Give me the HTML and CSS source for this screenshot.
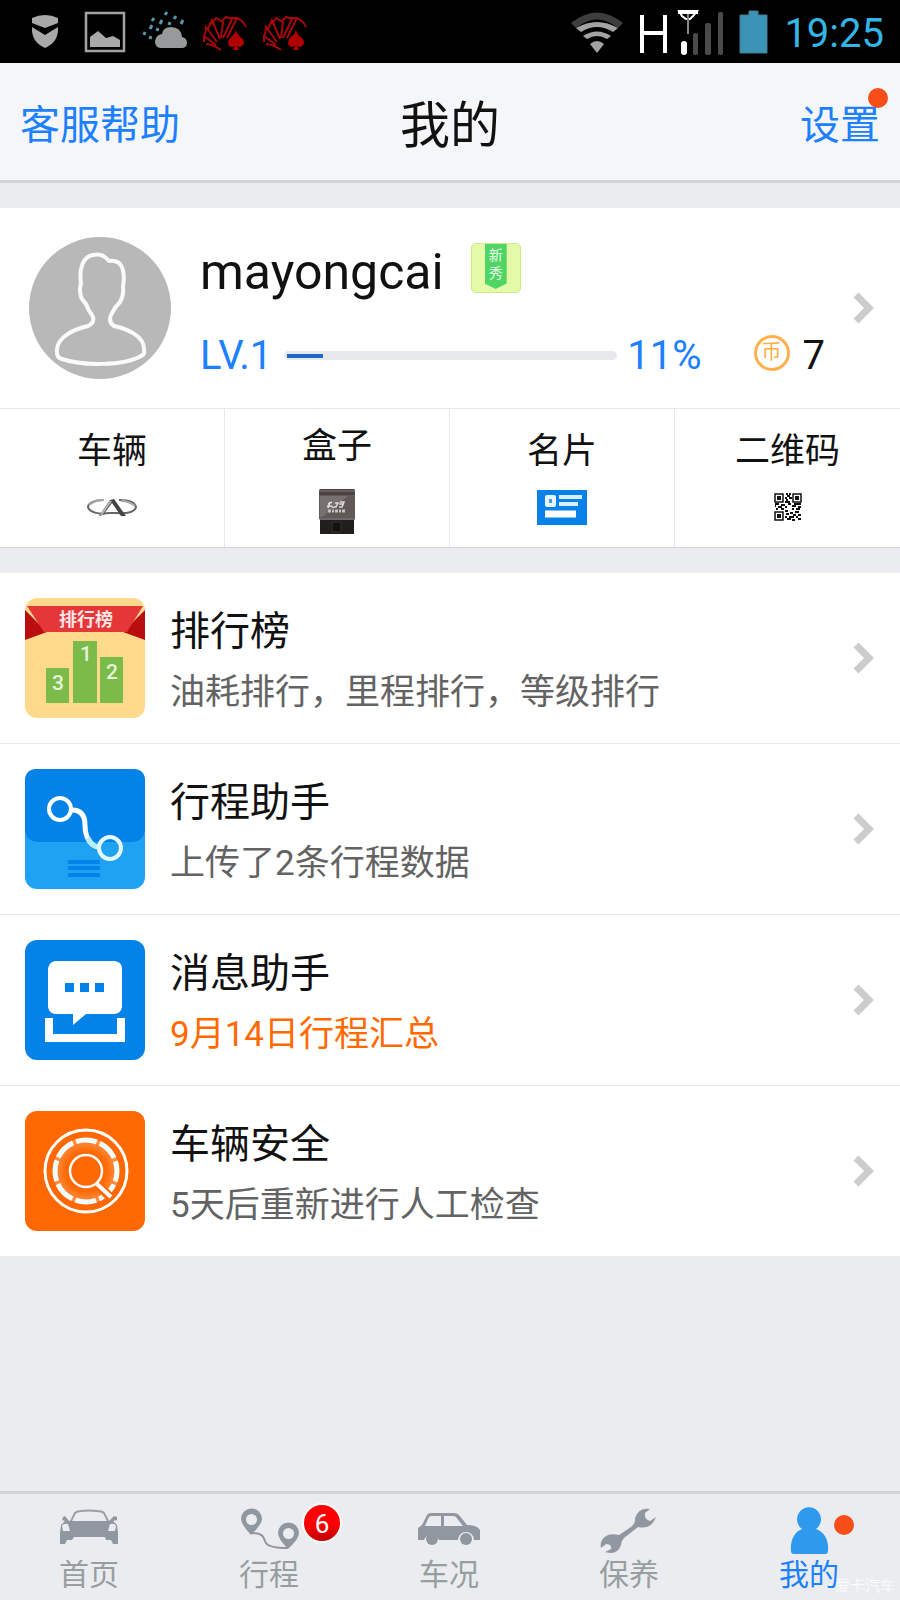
FILE: index.html
```html
<!DOCTYPE html>
<html lang="zh-CN">
<head>
<meta charset="utf-8">
<meta name="viewport" content="width=device-width, initial-scale=1">
<title>我的</title>
<link rel="stylesheet" href="styles.css">
</head>
<body>
<div class="statusbar">
  <div class="notices">
    <svg width="60" height="63" viewBox="0 0 60 63" fill="#a9a9a9"><path d="M32 18Q45 12 58 18V23L45 28L32 23Z"/><path d="M32 27L45 35L58 27Q59 42 45 48Q31 42 32 27Z"/></svg>
    <svg width="60" height="63" viewBox="0 0 60 63"><path d="M26 13H64V51H26Z" fill="none" stroke="#a3a3a3" stroke-width="2.500"/><path d="M30 47V37L38 31L46 38L53 36L60 40V47Z" fill="#a9a9a9"/></svg>
    <svg width="60" height="63" viewBox="0 0 60 63"><path d="M40 48Q35 47 35 41Q36 35 42 34Q43 27 51 27Q61 27 62 37Q67 38 67 43Q67 47 63 48Z" fill="#969a9b"/><path d="M47 12L45 15M34 18L32 21M56 16L54 19M42 20L40 24M50 22L49 25M63 20L61 24M32 25L30 29M38 28L37 31M25 32L24 35M31 36L30 39" stroke="#5a93aa" stroke-width="3"/></svg>
    <svg width="60" height="63" viewBox="0 0 60 63"><g fill="none" stroke="#a50808" stroke-width="2"><path d="M24 42L24 36L36 45M25 35L26 27L37 42M28 29L32 20L40 39M32 24L36 18L43 22L41 38M41 22L46 17L52 19L43 38M48 18L57 18L47 38M26 44Q32 44 41 50"/><path d="M51 18Q62 17 66 27"/></g><path d="M56 30Q57 35 63 39Q66 45 60 47Q58 47 57 46L59 50H53L55 46Q49 49 48 43Q48 40 51 37Q55 34 56 30Z" fill="#b00000"/></svg>
    <svg width="60" height="63" viewBox="0 0 60 63"><g fill="none" stroke="#a50808" stroke-width="2"><path d="M24 42L24 36L36 45M25 35L26 27L37 42M28 29L32 20L40 39M32 24L36 18L43 22L41 38M41 22L46 17L52 19L43 38M48 18L57 18L47 38M26 44Q32 44 41 50"/><path d="M51 18Q62 17 66 27"/></g><path d="M56 30Q57 35 63 39Q66 45 60 47Q58 47 57 46L59 50H53L55 46Q49 49 48 43Q48 40 51 37Q55 34 56 30Z" fill="#b00000"/></svg>
  </div>
  <div class="system">
    <svg width="52" height="42" viewBox="0 0 52 42"><path d="M0 12Q26-9 52 12L47 17Q26 0 5 17Z" fill="#3e3e3e"/><g fill="#a3a3a3"><path d="M5 17Q26 5 47 17L42 21Q26 11 10 21Z"/><path d="M12 25Q26 16 40 25L36 28Q26 22 16 28Z"/><path d="M19 33Q26 27 33 33L26 42Z"/></g></svg>
    <svg width="84" height="46" viewBox="0 0 84 46"><path d="M3 6V44M26 6V44M3 24H26" fill="none" stroke="#fff" stroke-width="4"/><path d="M40 2H58L54 7L51 10H47L43 7Z" fill="none" stroke="#fff" stroke-width="2"/><path d="M49 3V25" stroke="#888" stroke-width="2"/><path d="M39 1H59V5H39Z" fill="#fff"/><rect x="42" y="32" width="6" height="14" rx="3" fill="#fff"/><g fill="#4a4a4a"><rect x="54" y="24" width="5" height="22" rx="2"/><rect x="66" y="14" width="6" height="32" rx="2"/><rect x="79" y="3" width="5" height="43" rx="2"/></g></svg>
    <svg width="29" height="44" viewBox="0 0 29 44"><path d="M1 5H10V1H19V5H28V43H1Z" fill="#3b93b6" stroke="#4b7c8e"/></svg>
    <time class="clock">19:25</time>
  </div>
</div>

<header class="titlebar">
  <div class="side"><button class="text-button" type="button">客服帮助</button></div>
  <h1 class="title">我的</h1>
  <div class="side side-end"><button class="text-button" type="button">设置<span class="dot dot-corner"></span></button></div>
</header>

<main class="content">
  <section class="profile">
    <a class="profile-main" href="#profile">
      <svg class="avatar" viewBox="0 0 142 142"><circle cx="71" cy="71" r="71" fill="#b8b8b8"/><path d="M80 24Q74 16 64 18C53 20 50 33 52 47Q50 51 52 60Q54 64 57 67Q59 73 63 78Q67 85 59 89C45 92 29 100 28 112Q27 121 33 122C53 129 95 129 112 119Q116 118 115 113C116 99 98 92 85 89Q79 85 82 78Q85 71 91 65Q95 58 94 50C96 37 94 27 88 25Q85 23 80 24Z" fill="none" stroke="#fafafa" stroke-width="4" stroke-linejoin="round"/></svg>
      <div class="profile-info">
        <div class="name-line">
          <span class="name">mayongcai</span>
          <span class="rank-badge"><span class="rank-ribbon">新秀</span></span>
        </div>
        <div class="level-line">
          <span class="level">LV.1</span>
          <span class="track"><span class="fill" style="width:11%"></span></span>
          <span class="percent">11%</span>
          <span class="coin">币</span>
          <span class="coins">7</span>
        </div>
      </div>
      <svg class="chevron" viewBox="0 0 21 32"><path d="M3 3L16 16L3 29" fill="none" stroke="#ccc" stroke-width="7"/></svg>
    </a>
    <nav class="shortcuts">
      <a class="shortcut" href="#car"><span>车辆</span>
        <svg width="50" height="46" viewBox="0 0 50 46"><g fill="none" stroke="#666" stroke-width="2"><path d="M17 15C6 15 1 19 1 22C2 27 12 30 21 28H30C40 29 48 27 49 22C48 17 41 15 32 15"/><path d="M2 20Q8 15 17 15M34 16Q42 16 48 21" stroke="#aaa"/></g><path d="M12 31L23 15L27 14L39 31H34L25 18L16 30Z" fill="#444"/><path d="M14 30L24 16" stroke="#bbb" stroke-width="2"/></svg></a>
      <a class="shortcut" href="#box"><span class="raised">盒子</span>
        <svg width="50" height="46" viewBox="0 0 50 46"><path d="M8 30H42V46H8Z" fill="#211e1e"/><path d="M20 34H29V44H20Z" fill="#151212" stroke="#363030"/><path d="M8 1H42Q43 1 43 4V31Q43 32 41 32H9Q7 32 7 30V4Q7 1 8 1Z" fill="#615858"/><path d="M8 1H42L43 7H7Z" fill="#4b4343"/><path d="M8 3H42" stroke="#8b8078"/><path d="M8 8H36L10 29H8Z" fill="#777071"/><path d="M8 31H42" stroke="#807987"/><path d="M16 16L20 14M15 18H19L22 20M18 14L16 20M23 15H26L24 19H22M28 14H32L30 19H27M27 16H32" stroke="#ddd" stroke-width="1.500" fill="none"/><path d="M16 23H34" stroke="#c7c2c1" stroke-width="3" stroke-dasharray="3 1 2 1"/></svg></a>
      <a class="shortcut" href="#card"><span>名片</span>
        <svg width="50" height="46" viewBox="0 0 50 46"><path d="M0 5H50V40H0Z" fill="#0882e8"/><path d="M10 12H17V20H10Z" fill="#3da1f2" stroke="#e8f5ff" stroke-width="4" stroke-linejoin="round"/><path d="M22 12H45M22 19H41" stroke="#d8edff" stroke-width="4"/><path d="M8 29H39" stroke="#fff" stroke-width="7"/></svg></a>
      <a class="shortcut" href="#qr"><span>二维码</span>
        <svg width="50" height="46" viewBox="0 0 50 46"><g transform="translate(11 8)" fill="none" stroke="#111"><path d="M1 1H9V9H1ZM19 1H27V9H19ZM1 19H9V27H1Z" stroke-width="1.500"/><path d="M3 5H7M21 5H25M3 23H7" stroke-width="4"/><path d="M12 1H14M15 1H17M13 3H16M11 5H13M15 5H18M12 7H14M11 9H16M1 11H5M7 12H11M14 11H17M20 11H27M1 13H2M4 14H8M11 14H13M18 13H22M24 14H27M2 16H4M7 16H10M18 16H20M22 16H26M11 18H14M16 20H19M21 19H25M12 21H15M19 22H22M24 22H27M11 24H13M15 24H20M22 24H24M13 26H17M18 27H21M24 26H27" stroke-width="2"/></g></svg></a>
    </nav>
  </section>

  <ul class="menu">
    <li><a class="menu-item" href="#ranking">
      <svg class="app-icon" viewBox="0 0 120 120"><rect width="120" height="120" rx="12" fill="#ffda8d"/><path d="M0 12L22 34L0 42ZM120 12L98 34L120 42Z" fill="#b90e10"/><path d="M2 8H118L102 34H19Z" fill="#e53638"/><text x="61" y="28" class="art-label">排行榜</text><path d="M21 70H44V105H21ZM48 43H72V105H48ZM75 59H98V105H75Z" fill="#7abb49"/><g class="art-number"><text x="33" y="92">3</text><text x="61" y="63">1</text><text x="87" y="81">2</text></g></svg>
      <div class="menu-text"><h2>排行榜</h2><p>油耗排行，里程排行，等级排行</p></div>
      <svg class="chevron" viewBox="0 0 21 32"><path d="M3 3L16 16L3 29" fill="none" stroke="#ccc" stroke-width="7"/></svg>
    </a></li>
    <li><a class="menu-item" href="#trips">
      <svg class="app-icon" viewBox="0 0 120 120"><rect width="120" height="120" rx="12" fill="#1fa2f2"/><path d="M12 0H108Q120 0 120 12V62Q118 73 107 73H13Q2 73 0 62V12Q0 0 12 0Z" fill="#0382e8"/><path d="M43 93H75M43 99H75M43 106H75" stroke="#0382e8" stroke-width="4"/><g fill="none" stroke="#fff" stroke-width="4"><circle cx="35" cy="40" r="11"/><path d="M47 41C58 41 60 49 60 56C60 69 66 77 73 78" stroke-width="5"/></g><path d="M63 69Q67 77 73 78" fill="none" stroke="#b5edff" stroke-width="5"/><circle cx="85" cy="79" r="11" fill="none" stroke="#e4faff" stroke-width="4"/></svg>
      <div class="menu-text"><h2>行程助手</h2><p>上传了2条行程数据</p></div>
      <svg class="chevron" viewBox="0 0 21 32"><path d="M3 3L16 16L3 29" fill="none" stroke="#ccc" stroke-width="7"/></svg>
    </a></li>
    <li><a class="menu-item" href="#messages">
      <svg class="app-icon" viewBox="0 0 120 120"><rect width="120" height="120" rx="12" fill="#0382e8"/><path d="M30 21H90Q97 22 97 29V67Q96 73 90 74H61L48 85V74H30Q24 73 23 67V29Q24 22 30 21Z" fill="#fff"/><path d="M40 43H49V52H40ZM55 43H64V52H55ZM70 43H79V52H70Z" fill="#0382e8"/><path d="M24 78V98H96V78" fill="none" stroke="#fff" stroke-width="8"/></svg>
      <div class="menu-text"><h2>消息助手</h2><p class="alert">9月14日行程汇总</p></div>
      <svg class="chevron" viewBox="0 0 21 32"><path d="M3 3L16 16L3 29" fill="none" stroke="#ccc" stroke-width="7"/></svg>
    </a></li>
    <li><a class="menu-item" href="#safety">
      <svg class="app-icon" viewBox="0 0 120 120"><defs><radialGradient id="halo"><stop offset=".6" stop-color="#ff6802"/><stop offset="1" stop-color="#ff9650"/></radialGradient></defs><rect width="120" height="120" rx="12" fill="#ff6802"/><circle cx="61" cy="60" r="41" fill="none" stroke="#fff" stroke-width="3"/><circle cx="61" cy="60" r="33" fill="url(#halo)"/><circle cx="61" cy="60" r="31" fill="none" stroke="#f0feff" stroke-width="5" stroke-dasharray="21 3.350" stroke-dashoffset="-14"/><circle cx="61" cy="60" r="16" fill="#ff6802" stroke="#fff" stroke-width="2.500"/><path d="M74 75L86 87" stroke="#ff6802" stroke-width="9"/><path d="M72 73L86 86" stroke="#fff" stroke-width="4"/></svg>
      <div class="menu-text"><h2>车辆安全</h2><p>5天后重新进行人工检查</p></div>
      <svg class="chevron" viewBox="0 0 21 32"><path d="M3 3L16 16L3 29" fill="none" stroke="#ccc" stroke-width="7"/></svg>
    </a></li>
  </ul>
</main>

<nav class="tabbar">
  <a class="tab" href="#home"><span class="tab-icon">
    <svg width="64" height="50" viewBox="0 0 64 50"><path d="M13 17L18 7Q20 5 24 5Q32 4 40 5Q45 5 47 7L52 17" fill="none" stroke="#9aa0a4" stroke-width="2"/><path d="M12 15H52L57 10L60 11V14L56 15L60 19L61 27V38H56L54 34H10L8 38H3V27L4 19L8 15L5 14L6 11L8 10Z" fill="#9097a0"/><path d="M5 20Q6 17 11 18L13 25H6ZM59 20Q58 17 53 18L51 25H58ZM17 31H48L49 34H15Z" fill="#ebecf0"/></svg></span>首页</a>
  <a class="tab" href="#trip"><span class="tab-icon">
    <svg width="64" height="50" viewBox="0 0 64 50"><path d="M14 27C29 27 26 33 29 37Q32 42 51 42" fill="none" stroke="#9097a0" stroke-width="2"/><path fill-rule="evenodd" d="M14 29Q4 18 4 13A10.500 10.500 0 0 1 25 13Q25 18 14 29ZM14.500 8A5.500 5.500 0 1 0 14.500 19A5.500 5.500 0 1 0 14.500 8ZM51 43Q41 33 41 27A10.500 10.500 0 0 1 62 27Q62 33 51 43ZM51.500 22A5.500 5.500 0 1 0 51.500 33A5.500 5.500 0 1 0 51.500 22Z" fill="#9097a0"/></svg>
    <span class="count">6</span></span>行程</a>
  <a class="tab" href="#status"><span class="tab-icon">
    <svg width="64" height="50" viewBox="0 0 64 50"><path d="M1 34V22L5 19L10 9Q11 7 14 7H37Q40 7 42 9L50 19Q60 19 63 24V34H57A8 8 0 0 0 41 34H22A8 8 0 0 0 7 34ZM8 20H24V10H14Q12 10 11 13ZM27 10V20H46L39 11Q38 10 35 10Z" fill="#9097a0" fill-rule="evenodd"/><circle cx="15" cy="33" r="6" fill="#9097a0"/><circle cx="49" cy="33" r="6" fill="#9097a0"/></svg></span>车况</a>
  <a class="tab" href="#care"><span class="tab-icon">
    <svg width="64" height="50" viewBox="0 0 64 50"><path d="M53 3Q42 1 38 12Q39 17 34 21L22 29Q10 26 5 34Q3 38 4 42L9 38Q15 38 14 43L8 46Q20 50 24 39Q24 35 27 32L41 21Q54 24 59 11L53 15Q47 13 48 7Z" fill="#9097a0"/></svg></span>保养</a>
  <a class="tab active" href="#me"><span class="tab-icon">
    <svg width="64" height="50" viewBox="0 0 64 50"><path d="M25 23A12 12 0 1 1 39 23C48 26 52 35 51 45Q51 48 48 48H17Q14 48 14 45C13 35 17 26 25 23Z" fill="#2f9aed"/></svg>
    <span class="dot dot-tab"></span></span>我的</a>
  <span class="watermark">爱卡汽车</span>
</nav>
</body>
</html>
```

FILE: styles.css
```css
* { box-sizing: border-box; }

body {
  margin: 0;
  min-height: 100vh;
  display: flex;
  flex-direction: column;
  background: #ebecf0;
  color: #111;
  font-family: Roboto, "Noto Sans CJK SC", sans-serif;
}

svg { display: block; flex: none; }
a { color: inherit; text-decoration: none; }
h1, h2, p, ul { margin: 0; padding: 0; font-weight: 400; }
ul { list-style: none; }

.statusbar {
  height: 63px;
  display: flex;
  justify-content: space-between;
  background: #000;
}
.notices, .system { display: flex; }
.notices svg { overflow: visible; }
.system {
  align-items: center;
  padding-right: 16px;
  gap: 16px;
}
.clock {
  padding-top: 4px;
  color: #33b5e5;
  font-size: 40px;
  line-height: 60px;
}

.titlebar {
  height: 120px;
  display: flex;
  align-items: center;
  padding: 8px 20px 0;
  background: #f5f6f8;
  border-bottom: 3px solid #d3d4d5;
}
.side { flex: 1; display: flex; }
.side-end { justify-content: flex-end; }
.title { font-size: 50px; line-height: 72px; }
.text-button {
  position: relative;
  padding: 0;
  border: 0;
  background: none;
  color: #1c80ff;
  font: inherit;
  font-size: 40px;
  line-height: 60px;
}
.dot {
  position: absolute;
  width: 20px;
  height: 20px;
  border-radius: 50%;
  background: #f74e19;
}
.dot-corner { top: -8px; right: -8px; }
.dot-tab { top: 9px; right: -13px; }

.content { flex: 1; }

.profile {
  margin: 25px 0;
  background: #fff;
  border-bottom: 1px solid #d3d4d8;
}
.profile-main {
  height: 200px;
  display: flex;
  align-items: center;
  padding: 0 26px 0 29px;
}
.avatar { width: 142px; height: 142px; }
.profile-info {
  flex: 1;
  padding: 12px 0 0 29px;
}
.name-line, .level-line { display: flex; align-items: center; }
.name-line { gap: 27px; }
.name { font-size: 50px; line-height: 84px; }
.rank-badge {
  width: 50px;
  height: 50px;
  display: flex;
  justify-content: center;
  margin-bottom: 8px;
  background: #e4fca8;
  border: 1px solid #cdea85;
  border-radius: 5px;
}
.rank-ribbon {
  width: 22px;
  height: 45px;
  padding: 2px 4px;
  background: #50d565;
  clip-path: polygon(0 0, 100% 0, 100% 88%, 50% 100%, 0 88%);
  color: #e3ffe5;
  font-size: 14px;
  line-height: 18px;
}
.level-line {
  font-size: 40px;
  line-height: 84px;
}
.level, .percent { color: #1c80ff; }
.track {
  flex: 1;
  height: 9px;
  margin: 0 10px 2px 12px;
  padding: 3px;
  background: #e8e9eb;
  border-radius: 5px;
}
.fill {
  display: block;
  height: 4px;
  background: #2068c5;
}
.coin {
  width: 36px;
  height: 36px;
  margin: 0 13px 6px 52px;
  border: 3px solid #ffb04c;
  border-radius: 50%;
  color: #ffac45;
  font-size: 20px;
  line-height: 28px;
  text-align: center;
}
.coins { margin-right: 28px; }
.chevron { width: 21px; height: 32px; }

.shortcuts {
  height: 139px;
  display: grid;
  grid-template-columns: repeat(4, 1fr);
  border-top: 1px solid #e7e7ec;
}
.shortcut {
  display: flex;
  flex-direction: column;
  align-items: center;
  padding-top: 19px;
  border-right: 1px solid #e7e7ec;
  font-size: 35px;
  line-height: 48px;
}
.shortcut:last-child { border-right: 0; }
.shortcut svg { margin-top: 9px; }
.shortcut .raised { margin: -5px 0 8px; }

.menu { background: #fff; }
.menu li + li { border-top: 1px solid #e9e9ea; }
.menu-item {
  height: 170px;
  display: flex;
  align-items: center;
  padding: 0 26px 0 25px;
}
.app-icon { width: 120px; height: 120px; }
.menu-text { flex: 1; padding: 8px 0 0 25px; }
.menu-text h2 { font-size: 40px; line-height: 62px; }
.menu-text p { color: #636363; font-size: 35px; line-height: 60px; }
.menu-text .alert { color: #ff6a00; }
.art-label {
  fill: #ffe6e4;
  font-size: 18px;
  font-weight: 700;
  text-anchor: middle;
}
.art-number {
  fill: #e4f3d9;
  font-size: 21px;
  font-weight: 500;
  text-anchor: middle;
}

.tabbar {
  position: relative;
  height: 109px;
  display: grid;
  grid-template-columns: repeat(5, 1fr);
  border-top: 3px solid #d3d4d6;
}
.tab {
  display: flex;
  flex-direction: column;
  align-items: center;
  padding: 12px 2px 0 0;
  color: #979ea0;
  font-size: 30px;
  line-height: 38px;
}
.tab.active { color: #1c80ff; }
.tab-icon { position: relative; }
.count {
  position: absolute;
  top: -3px;
  right: -41px;
  width: 40px;
  height: 40px;
  border: 2px solid #fafafa;
  border-radius: 50%;
  background: linear-gradient(#f00 50%, #c00000);
  color: #fff;
  font-size: 26px;
  line-height: 38px;
  text-align: center;
}
.watermark {
  position: absolute;
  right: 5px;
  bottom: 4px;
  color: #fafafa;
  font-size: 15px;
  line-height: 20px;
}
```
